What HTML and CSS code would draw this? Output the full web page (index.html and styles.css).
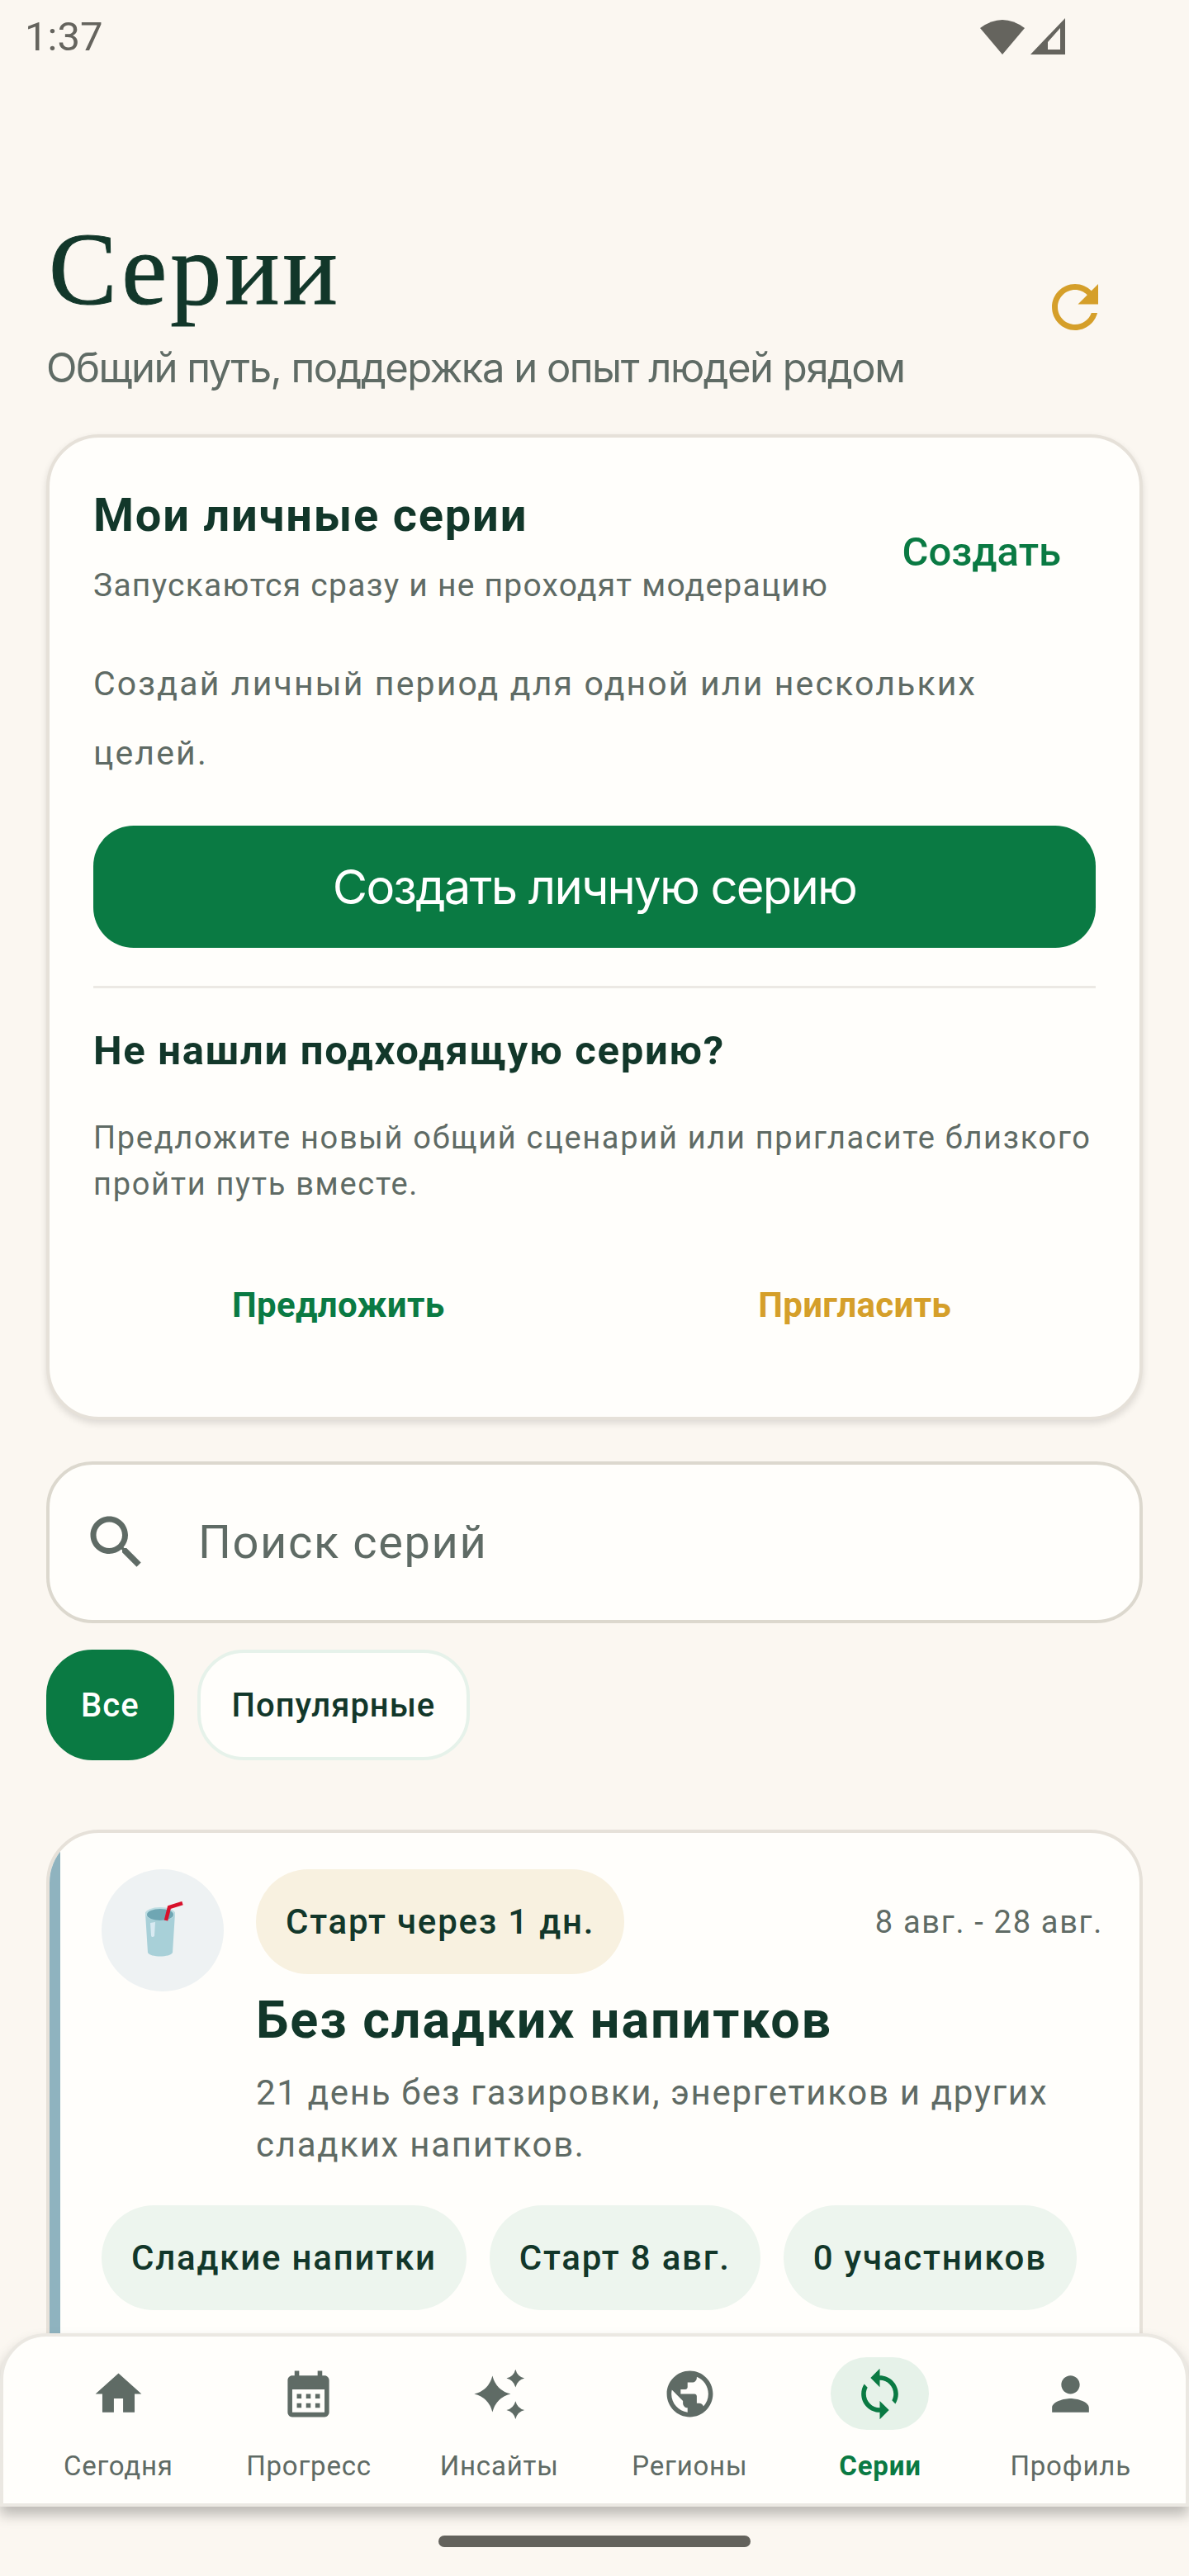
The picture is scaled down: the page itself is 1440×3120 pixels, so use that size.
FILE: index.html
```html
<!DOCTYPE html>
<html lang="ru">
<head>
  <meta charset="UTF-8" />
  <title>Серии</title>
  <link rel="stylesheet" href="styles.css">
</head>
<body>

<div class="screen">

  <div class="status">
    <span class="time">1:37</span>
    <div class="status-icons">
      <svg class="wifi" viewBox="0 0 54 44"><path d="M0 12 Q27 -8 54 12 L27 44z"/></svg>
      <svg class="signal" viewBox="0 0 42 44"><path fill-rule="evenodd" d="M42 0V44H0zM36 12 21 29V38H36z"/></svg>
    </div>
  </div>

  <div class="head">
    <div>
      <h1>Серии</h1>
      <p class="lead">Общий путь, поддержка и опыт людей рядом</p>
    </div>
    <svg class="refresh" viewBox="0 0 24 24"><path d="M17.65 6.35C16.2 4.9 14.21 4 12 4c-4.42 0-7.99 3.58-7.99 8s3.57 8 7.99 8c3.73 0 6.84-2.55 7.73-6h-2.08c-.82 2.33-3.04 4-5.65 4-3.31 0-6-2.69-6-6s2.69-6 6-6c1.66 0 3.14.69 4.22 1.78L13 11h7V4l-2.35 2.35z"/></svg>
  </div>

  <section class="card personal">
    <div class="personal-top">
      <div>
        <h2>Мои личные серии</h2>
        <p class="hint">Запускаются сразу и не проходят модерацию</p>
      </div>
      <span class="create-link">Создать</span>
    </div>
    <p class="note">Создай личный период для одной или нескольких целей.</p>
    <button class="primary">Создать личную серию</button>
    <div class="divider"></div>
    <h3>Не нашли подходящую серию?</h3>
    <p class="offer">Предложите новый общий сценарий или пригласите близкого пройти путь вместе.</p>
    <div class="actions">
      <span class="act green">Предложить</span>
      <span class="act gold">Пригласить</span>
    </div>
  </section>

  <div class="search">
    <svg viewBox="0 0 24 24"><path d="M15.5 14h-.79l-.28-.27C15.41 12.59 16 11.11 16 9.5 16 5.91 13.09 3 9.5 3S3 5.91 3 9.5 5.91 16 9.5 16c1.61 0 3.09-.59 4.23-1.57l.27.28v.79l5 4.99L20.49 19l-4.99-5zm-6 0C7.01 14 5 11.99 5 9.5S7.01 5 9.5 5 14 7.01 14 9.5 11.99 14 9.5 14z"/></svg>
    <span>Поиск серий</span>
  </div>

  <div class="chips">
    <span class="chip on">Все</span>
    <span class="chip">Популярные</span>
  </div>

  <section class="card series">
    <div class="series-row">
      <div class="avatar">
        <svg viewBox="0 0 60 70">
          <path fill="#a8d0d8" d="M3 14C3 8 39 8 39 14L36 62C33 68 9 68 6 62z"/>
          <ellipse cx="21" cy="15" rx="18" ry="8" fill="#bcdde2"/>
          <ellipse cx="21" cy="16" rx="16" ry="7" fill="#6fa6b3"/>
          <path fill="#d9eaf2" d="M9 26 15 25 14 42C12 44 10 43 10 41z"/>
          <path fill="none" stroke="#d8112b" stroke-width="4.5" d="M28 23 32 7 48 2"/>
        </svg>
      </div>
      <div class="series-body">
        <div class="series-top">
          <span class="badge">Старт через 1 дн.</span>
          <span class="dates">8 авг. - 28 авг.</span>
        </div>
        <h4>Без сладких напитков</h4>
        <p class="desc">21 день без газировки, энергетиков и других сладких напитков.</p>
      </div>
    </div>
    <div class="tags">
      <span class="tag">Сладкие напитки</span>
      <span class="tag">Старт 8 авг.</span>
      <span class="tag">0 участников</span>
    </div>
  </section>

  <nav class="nav">
    <div class="nav-item">
      <div class="nav-icon"><svg viewBox="0 0 24 24"><path d="M10 20v-6h4v6h5v-8h3L12 3 2 12h3v8z"/></svg></div>
      <span>Сегодня</span>
    </div>
    <div class="nav-item">
      <div class="nav-icon"><svg viewBox="0 0 24 24"><path d="M19 4h-1V2h-2v2H8V2H6v2H5c-1.11 0-1.99.9-1.99 2L3 20c0 1.1.89 2 2 2h14c1.1 0 2-.9 2-2V6c0-1.1-.9-2-2-2zm0 16H5V10h14v10zM9 14H7v-2h2v2zm4 0h-2v-2h2v2zm4 0h-2v-2h2v2zm-8 4H7v-2h2v2zm4 0h-2v-2h2v2zm4 0h-2v-2h2v2z"/></svg></div>
      <span>Прогресс</span>
    </div>
    <div class="nav-item">
      <div class="nav-icon"><svg viewBox="0 0 24 24"><path d="M9.1 4.1Q10.7 10.4 17 12 10.7 13.6 9.1 19.9 7.5 13.6 1.2 12 7.5 10.4 9.1 4.1zM19.1 1.3Q19.9 4.4 23 5.2 19.9 6 19.1 9.1 18.3 6 15.2 5.2 18.3 4.4 19.1 1.3zM19.1 15.1Q19.9 18.2 23 19 19.9 19.8 19.1 22.9 18.3 19.8 15.2 19 18.3 18.2 19.1 15.1z"/></svg></div>
      <span>Инсайты</span>
    </div>
    <div class="nav-item">
      <div class="nav-icon"><svg viewBox="0 0 24 24"><path d="M12 2C6.48 2 2 6.48 2 12s4.48 10 10 10 10-4.48 10-10S17.52 2 12 2zm-1 17.93c-3.95-.49-7-3.85-7-7.93 0-.62.08-1.21.21-1.79L9 15v1c0 1.1.9 2 2 2v1.93zm6.9-2.54c-.26-.81-1-1.39-1.9-1.39h-1v-3c0-.55-.45-1-1-1H8v-2h2c.55 0 1-.45 1-1V7h2c1.1 0 2-.9 2-2v-.41c2.93 1.19 5 4.06 5 7.41 0 2.08-.8 3.97-2.1 5.39z"/></svg></div>
      <span>Регионы</span>
    </div>
    <div class="nav-item active">
      <div class="nav-icon"><svg viewBox="0 0 24 24"><path d="M12 4V1L8 5l4 4V6c3.31 0 6 2.69 6 6 0 1.01-.25 1.97-.7 2.8l1.46 1.46C19.54 15.03 20 13.57 20 12c0-4.42-3.58-8-8-8zm0 14c-3.31 0-6-2.69-6-6 0-1.01.25-1.97.7-2.8L5.24 7.74C4.46 8.97 4 10.43 4 12c0 4.42 3.58 8 8 8v3l4-4-4-4v3z"/></svg></div>
      <span>Серии</span>
    </div>
    <div class="nav-item">
      <div class="nav-icon"><svg viewBox="0 0 24 24"><path d="M12 12c2.21 0 4-1.79 4-4s-1.79-4-4-4-4 1.79-4 4 1.79 4 4 4zm0 2c-2.67 0-8 1.34-8 4v2h16v-2c0-2.66-5.33-4-8-4z"/></svg></div>
      <span>Профиль</span>
    </div>
  </nav>

  <div class="gesture"></div>
</div>

</body>
</html>
```

FILE: styles.css
```css
* {
  box-sizing: border-box;
}

body {
  margin: 0;
  background: #fbf7f1;
  font-family: Roboto, sans-serif;
  color: #12372a;
}

h1, h2, h3, h4, p {
  margin: 0;
}

.screen {
  position: relative;
  height: 3120px;
  overflow: hidden;
  padding: 0 56px;
}

/* status bar */
.status {
  height: 88px;
  margin: 0 -26px;
  display: flex;
  align-items: center;
  justify-content: space-between;
}

.time {
  font-size: 49px;
  color: #65645e;
}

.status-icons {
  display: flex;
  gap: 7px;
  margin-right: 120px;
}

.wifi {
  width: 54px;
  height: 44px;
  fill: #65645e;
}

.signal {
  width: 42px;
  height: 44px;
  fill: #65645e;
}

/* title */
.head {
  height: 438px;
  padding: 174px 0 0;
  display: flex;
  justify-content: space-between;
  align-items: flex-start;
}

h1 {
  font-family: "Liberation Serif", serif;
  font-weight: 400;
  font-size: 124px;
  line-height: 130px;
  letter-spacing: 4px;
  margin-left: 3px;
  -webkit-text-stroke: 1px #12372a;
  color: #12372a;
}

.lead {
  font-family: Inter, sans-serif;
  font-size: 49px;
  line-height: 60px;
  letter-spacing: -1.5px;
  color: #5f6b65;
  margin-top: 24px;
}

.refresh {
  width: 84px;
  height: 84px;
  fill: #d59f2a;
  margin: 68px 40px 0 0;
}

.card {
  background: #fffefb;
  border: 4px solid #e6e1d9;
  border-radius: 64px;
}

.personal {
  height: 1194px;
  padding: 56px 53px;
  box-shadow: 0 4px 8px rgba(0,0,0,0.12);
}

.personal-top {
  display: flex;
  justify-content: space-between;
  align-items: center;
}

h2 {
  font-size: 56px;
  line-height: 76px;
  font-weight: 700;
  letter-spacing: 1.8px;
}

.hint {
  font-size: 39px;
  line-height: 50px;
  color: #5f6b65;
  letter-spacing: 1.25px;
  margin-top: 22px;
}

.create-link {
  font-size: 49px;
  font-weight: 500;
  color: #0a7a43;
  margin: 16px 42px 0 0;
}

.note {
  font-size: 41px;
  line-height: 84px;
  color: #5f6b65;
  letter-spacing: 2.15px;
  margin-top: 52px;
}

.primary {
  display: block;
  width: 100%;
  height: 148px;
  margin-top: 46px;
  background: #0a7a43;
  border: 0;
  border-radius: 49px;
  color: #fff;
  font-family: Inter, sans-serif;
  font-size: 58px;
  letter-spacing: -1.8px;
}

.divider {
  height: 3px;
  background: #ece9e4;
  margin-top: 46px;
}

h3 {
  font-size: 49px;
  line-height: 60px;
  font-weight: 700;
  letter-spacing: 1.7px;
  margin-top: 46px;
}

.offer {
  font-size: 38px;
  line-height: 56px;
  color: #5f6b65;
  letter-spacing: 1.7px;
  margin-top: 47px;
}

.actions {
  display: grid;
  grid-template-columns: 1fr 1fr;
  gap: 42px;
  padding-left: 5px;
  margin-top: 94px;
  text-align: center;
}

.act {
  font-size: 42px;
  font-weight: 700;
  letter-spacing: 0.3px;
}

.green {
  color: #0a7a43;
}

.gold {
  color: #d59f2a;
}

/* search and filters */
.search {
  height: 196px;
  margin-top: 50px;
  padding-left: 39px;
  display: flex;
  align-items: center;
  gap: 57px;
  background: #fffefb;
  border: 4px solid #dcd8ce;
  border-radius: 56px;
  font-size: 56px;
  letter-spacing: 1.6px;
  color: #5f6b65;
}

.search svg {
  width: 84px;
  height: 84px;
  fill: #5f6b65;
}

.chips {
  display: flex;
  gap: 28px;
  margin-top: 32px;
}

.chip {
  height: 134px;
  padding: 0 38px;
  display: flex;
  align-items: center;
  background: #fffefb;
  border: 4px solid #e6f2ea;
  border-radius: 56px;
  font-size: 40px;
  font-weight: 500;
  letter-spacing: 1px;
}

.chip.on {
  background: #0a7a43;
  border-color: #0a7a43;
  color: #fff;
}

/* series card */
.series {
  height: 800px;
  margin-top: 84px;
  position: relative;
  padding: 44px 44px 0 63px;
  overflow: hidden;
}

.series::before {
  content: "";
  position: absolute;
  left: 0;
  top: 0;
  bottom: 0;
  width: 13px;
  background: #8fb3bf;
}

.series-row {
  display: flex;
  gap: 39px;
}

.avatar {
  width: 148px;
  height: 148px;
  flex: none;
  border-radius: 50%;
  background: #eef2f3;
  display: flex;
  align-items: center;
  justify-content: center;
}

.avatar svg {
  width: 60px;
  height: 70px;
  margin: 0 0 0 12px;
}

.series-body {
  flex: 1;
}

.series-top {
  display: flex;
  justify-content: space-between;
  align-items: center;
}

.badge {
  height: 127px;
  padding: 0 36px;
  display: flex;
  align-items: center;
  background: #f8f1e0;
  border-radius: 64px;
  font-size: 42px;
  font-weight: 500;
  letter-spacing: 1.8px;
}

.dates {
  font-size: 38px;
  letter-spacing: 1.7px;
  color: #5f6b65;
}

h4 {
  font-size: 63px;
  line-height: 80px;
  font-weight: 700;
  letter-spacing: 1.9px;
  margin-top: 16px;
}

.desc {
  font-size: 42px;
  line-height: 63px;
  letter-spacing: 1.7px;
  color: #5f6b65;
  margin-top: 16px;
}

.tags {
  display: flex;
  gap: 28px;
  margin-top: 42px;
}

.tag {
  height: 127px;
  padding: 0 36px;
  display: flex;
  align-items: center;
  background: #edf5ee;
  border-radius: 64px;
  font-size: 42px;
  font-weight: 500;
  letter-spacing: 1.8px;
}

/* bottom navigation, lies over the list */
.nav {
  position: absolute;
  left: 0;
  right: 0;
  top: 2826px;
  height: 210px;
  padding: 25px 24px 0;
  display: grid;
  grid-template-columns: repeat(6, 1fr);
  background: #fffefb;
  border: 4px solid #ebe8e2;
  border-radius: 56px 56px 0 0;
  box-shadow: 0 10px 16px rgba(0,0,0,0.25);
}

.nav-item {
  display: flex;
  flex-direction: column;
  align-items: center;
  font-size: 33px;
  letter-spacing: 0.8px;
  color: #5f6b65;
}

.nav-icon {
  width: 119px;
  height: 88px;
  border-radius: 44px;
  display: flex;
  align-items: center;
  justify-content: center;
}

.nav-icon svg {
  width: 67px;
  height: 67px;
  fill: #5f6b65;
}

.nav-item span {
  margin-top: 24px;
}

.active {
  color: #0a7a43;
  font-weight: 700;
}

.active .nav-icon {
  background: #e6f2e9;
}

.active .nav-icon svg {
  fill: #0a7a43;
}

.gesture {
  position: absolute;
  left: 531px;
  top: 3071px;
  width: 378px;
  height: 14px;
  border-radius: 7px;
  background: #63625c;
}
```
